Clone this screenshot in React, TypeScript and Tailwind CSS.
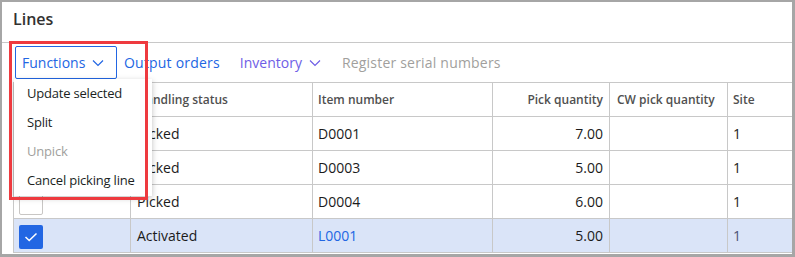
import React from "react";

const Chevron = ({ className }: { className?: string }) => (
  <svg width="12" height="8" viewBox="0 0 12 8" className={className} fill="none">
    <polyline points="1,1.5 6,6.5 11,1.5" stroke="currentColor" strokeWidth="1.2" />
  </svg>
);

const Checkbox = ({ checked }: { checked?: boolean }) =>
  checked ? (
    <div className="w-[24px] h-[24px] rounded-[2px] bg-[#2266e3] flex items-center justify-center">
      <svg width="14" height="10" viewBox="0 0 14 10" fill="none">
        <polyline points="1.5,5 5.2,8.5 12.5,1.5" stroke="white" strokeWidth="1.5" />
      </svg>
    </div>
  ) : (
    <div className="w-[24px] h-[24px] rounded-[2px] bg-white border border-[#c8c6c4]" />
  );

const rows = [
  { status: "Picked", item: "D0001", qty: "7.00", site: "1" },
  { status: "Picked", item: "D0003", qty: "5.00", site: "1" },
  { status: "Picked", item: "D0004", qty: "6.00", site: "1" },
  { status: "Activated", item: "L0001", qty: "5.00", site: "1", selected: true },
];

export default function App() {
  return (
    <div
      className="relative w-[795px] h-[257px] bg-white border-t-2 border-l-2 border-r-[3px] border-b-[3px] border-[#a6a6a6] overflow-hidden"
      style={{ fontFamily: '"Open Sans", "Noto Sans", sans-serif' }}
    >
      {/* Title */}
      <div className="h-[40px] pl-[11px] flex items-center">
        <span className="text-[16px] font-semibold text-[#323130] leading-none -mt-[7px]">Lines</span>
      </div>
      <div className="h-px bg-[#c8c8c8]" />

      {/* Toolbar */}
      <div className="h-[39px] flex items-center pl-[13px] text-[14px]">
        <div className="h-[33px] w-[102px] border border-[#2266e3] rounded-[2px] flex items-center pl-[6px] gap-[7px] text-[#2266e3]">
          <span>Functions</span>
          <Chevron />
        </div>
        <span className="ml-[7px] text-[#2266e3] tracking-[0.2px]">Output orders</span>
        <span className="ml-[20px] text-[#6e5ee6] flex items-center gap-[7px]">
          Inventory <Chevron />
        </span>
        <span className="ml-[21px] text-[#a19f9d] tracking-[0.2px]">Register serial numbers</span>
      </div>

      {/* Table */}
      <div className="ml-[11px] w-[779px] border-t border-[#c8c8c8]">
        <div className="flex h-[34px] border-b border-[#c8c8c8] text-[12px] font-semibold text-[#505050]">
          <div className="w-[117px] border-l border-[#c8c8c8]" />
          <div className="w-[182px] border-l border-[#c8c8c8] flex items-center pl-[6px]">Handling status</div>
          <div className="w-[180px] border-l border-[#c8c8c8] flex items-center pl-[5px]">Item number</div>
          <div className="w-[117px] border-l border-[#c8c8c8] flex items-center justify-end pr-[6px]">Pick quantity</div>
          <div className="w-[118px] border-l border-[#c8c8c8] flex items-center pl-[7px]">CW pick quantity</div>
          <div className="w-[65px] border-l border-[#c8c8c8] flex items-center pl-[5px]">Site</div>
        </div>
        {rows.map((r, i) => (
          <div
            key={i}
            className={`flex h-[34px] border-b border-[#c8c8c8] text-[14px] ${r.selected ? "bg-[#dae4f8]" : "bg-white"} text-[#1b1b1b]`}
          >
            <div className="w-[117px] border-l border-[#c8c8c8] flex items-center pl-[5px] pt-[3px]">
              <Checkbox checked={r.selected} />
            </div>
            <div className="w-[182px] border-l border-[#c8c8c8] flex items-center pl-[6px]">{r.status}</div>
            <div className={`w-[180px] border-l border-[#c8c8c8] flex items-center pl-[5px] ${r.selected ? "text-[#2266e3]" : ""}`}>
              {r.item}
            </div>
            <div className="w-[117px] border-l border-[#c8c8c8] flex items-center justify-end pr-[6px]">{r.qty}</div>
            <div className="w-[118px] border-l border-[#c8c8c8]" />
            <div className={`w-[65px] border-l border-[#c8c8c8] flex items-center pl-[5px] ${r.selected ? "text-[#4a5275]" : ""}`}>
              {r.site}
            </div>
          </div>
        ))}
      </div>

      {/* Dropdown menu */}
      <div className="absolute left-[12px] top-[77px] w-[138px] h-[117px] bg-white shadow-[0_2px_6px_rgba(0,0,0,0.25)] text-[13px] tracking-[-0.2px] text-[#201f1e]">
        <div className="h-[29px] flex items-center pl-[13px]">Update selected</div>
        <div className="h-[29px] flex items-center pl-[13px]">Split</div>
        <div className="h-[29px] flex items-center pl-[13px] text-[#a19f9d]">Unpick</div>
        <div className="h-[29px] flex items-center pl-[13px]">Cancel picking line</div>
      </div>

      {/* Red highlight box */}
      <div className="absolute left-[7px] top-[39px] w-[139px] h-[159px] border-[3px] border-[#ee3a3f]" />
    </div>
  );
}
